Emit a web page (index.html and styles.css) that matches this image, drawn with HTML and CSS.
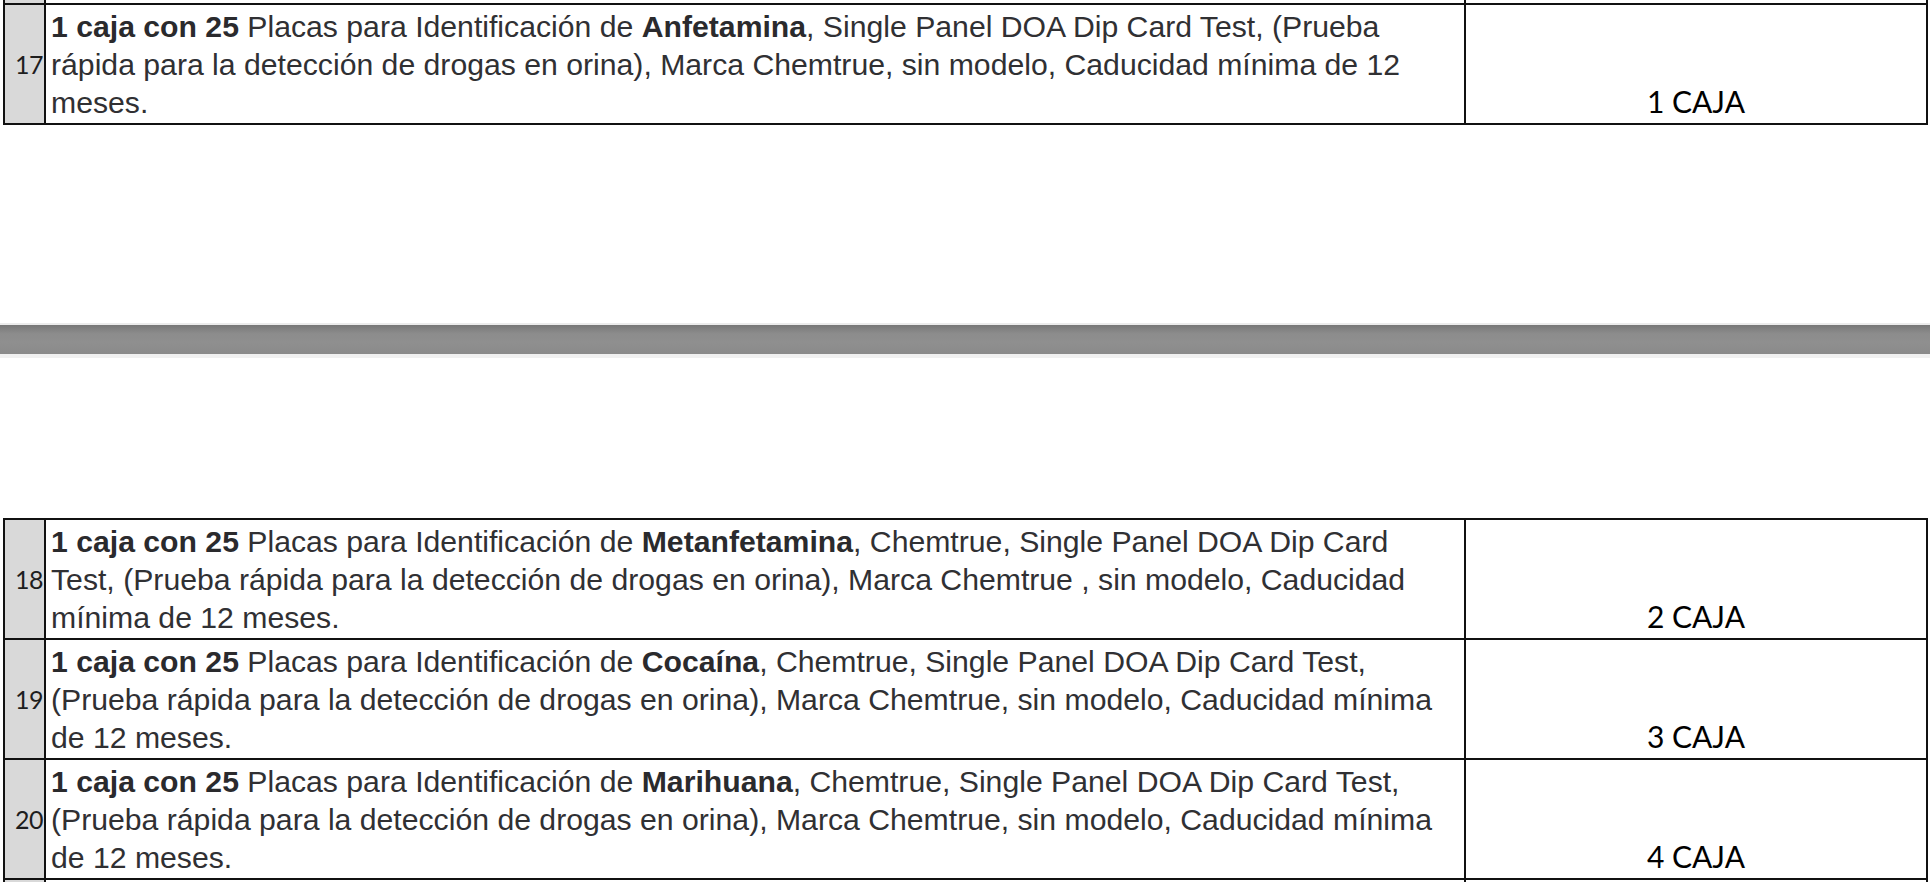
FILE: index.html
```html
<!DOCTYPE html>
<html lang="es">
<head>
<meta charset="utf-8">
<title>Partidas</title>
<link rel="stylesheet" href="styles.css">
</head>
<body>
<div class="page">
  <div class="sheet sheet-top">
    <div class="cell num partial"></div>
    <div class="cell desc partial"></div>
    <div class="cell qty partial"></div>

    <div class="cell num">17</div>
    <div class="cell desc"><b>1 caja con 25</b> Placas para Identificación de <b>Anfetamina</b>, Single Panel DOA Dip Card Test, (Prueba rápida para la detección de drogas en orina), Marca Chemtrue, sin modelo, Caducidad mínima de 12 meses.</div>
    <div class="cell qty">1 CAJA</div>
  </div>

  <div class="divider"></div>

  <div class="sheet sheet-bottom">
    <div class="cell num">18</div>
    <div class="cell desc"><b>1 caja con 25</b> Placas para Identificación de <b>Metanfetamina</b>, Chemtrue, Single Panel DOA Dip Card Test, (Prueba rápida para la detección de drogas en orina), Marca Chemtrue , sin modelo, Caducidad mínima de 12 meses.</div>
    <div class="cell qty">2 CAJA</div>

    <div class="cell num">19</div>
    <div class="cell desc"><b>1 caja con 25</b> Placas para Identificación de <b>Cocaína</b>, Chemtrue, Single Panel DOA Dip Card Test, (Prueba rápida para la detección de drogas en orina), Marca Chemtrue, sin modelo, Caducidad mínima de 12 meses.</div>
    <div class="cell qty">3 CAJA</div>

    <div class="cell num">20</div>
    <div class="cell desc"><b>1 caja con 25</b> Placas para Identificación de <b>Marihuana</b>, Chemtrue, Single Panel DOA Dip Card Test, (Prueba rápida para la detección de drogas en orina), Marca Chemtrue, sin modelo, Caducidad mínima de 12 meses.</div>
    <div class="cell qty">4 CAJA</div>

    <div class="cell num partial"></div>
    <div class="cell desc partial"></div>
    <div class="cell qty partial"></div>
  </div>
</div>
</body>
</html>
```
FILE: styles.css
```css
html, body {
  margin: 0;
  padding: 0;
  background: #ffffff;
}

body {
  width: 1930px;
  height: 882px;
  overflow: hidden;
}

.page {
  display: flex;
  flex-direction: column;
}

.sheet {
  display: grid;
  grid-template-columns: 39px 1418px 460px;
  grid-auto-rows: 118px;
  gap: 2px;
  padding: 2px;
  margin-left: 3px;
  width: 1921px;
  background: #111111;
}

.sheet-top {
  padding-top: 0;
  grid-template-rows: 3px 118px;
}

.sheet-bottom {
  margin-top: 160px;
  padding-bottom: 0;
  grid-template-rows: 118px 118px 118px 2px;
}

.cell {
  background: #ffffff;
  overflow: hidden;
}

.cell.partial {
  padding: 0;
}

.num {
  background: #d9d9d9;
  font-family: Lato, "Liberation Sans", sans-serif;
  font-size: 25px;
  color: #1e1e1e;
  display: flex;
  align-items: center;
  justify-content: flex-end;
  padding-right: 1px;
  letter-spacing: -0.5px;
}

.desc {
  font-family: "Liberation Sans", Arial, sans-serif;
  font-size: 30.2px;
  line-height: 38px;
  color: #303033;
  padding: 3px 30px 0 5px;
}

.desc b {
  font-weight: bold;
  color: #2a2a2d;
}

.qty {
  font-family: Lato, "Liberation Sans", sans-serif;
  font-size: 30px;
  line-height: 36px;
  color: #000000;
  display: flex;
  align-items: flex-end;
  justify-content: center;
  padding-bottom: 4px;
}

.divider {
  margin-top: 198px;
  height: 29px;
  border-top: 2px solid #ececec;
  border-bottom: 4px solid #f0f0f0;
  background: linear-gradient(to bottom, #777777 0%, #8c8c8c 30%, #8f8f8f 60%, #8a8a8a 100%);
}
```
